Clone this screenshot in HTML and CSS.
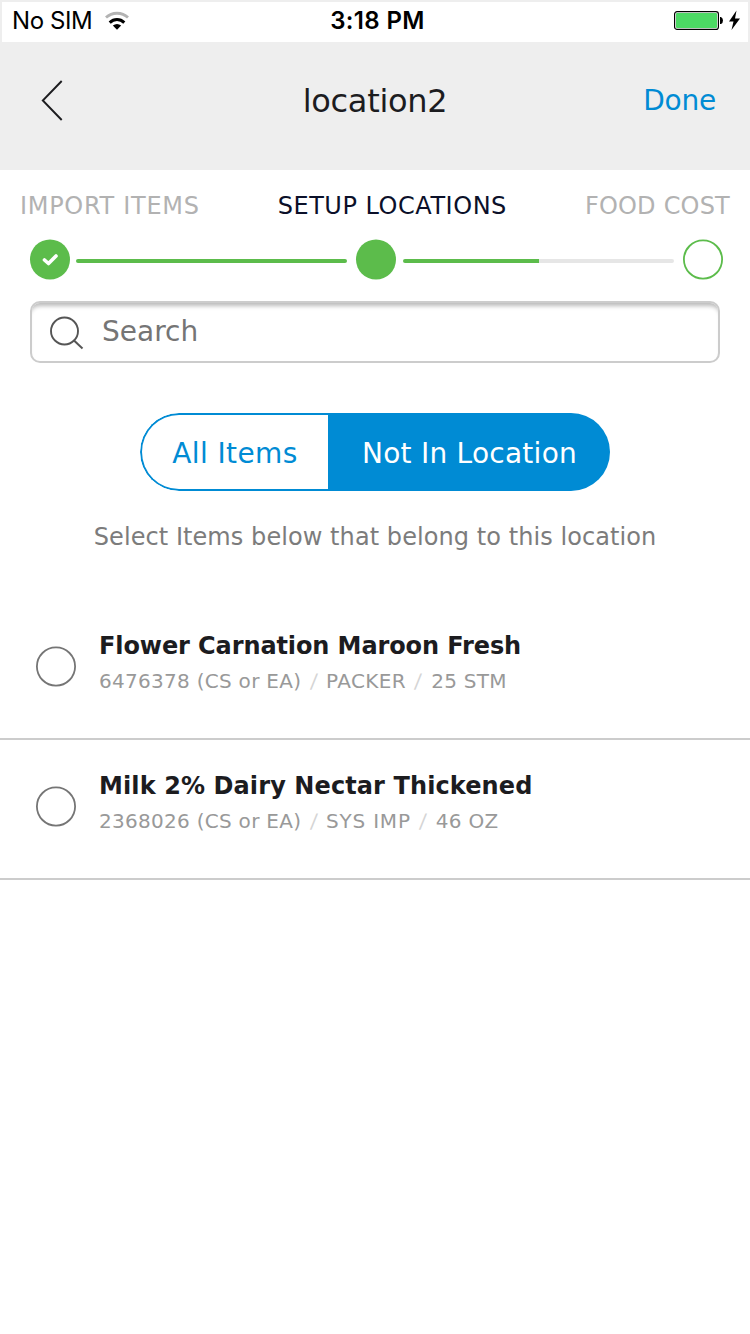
FILE: index.html
```html
<!DOCTYPE html>
<html lang="en">
<head>
<meta charset="utf-8">
<title>location2</title>
<link rel="stylesheet" href="styles.css">
</head>
<body>
<div class="status">
  <div class="carrier"><span class="sim">No SIM</span>
    <svg width="24" height="18" viewBox="0 0 24 18"><path d="M1 5.600C7-.2 17-.2 23 5.600" fill="none" stroke="#b3b3b3" stroke-width="2.800"/><path d="M4.700 10.600C9 6.500 15 6.500 19.300 10.600" fill="none" stroke="#000" stroke-width="3"/><path d="M7.800 13.600Q12 10.200 16.200 13.600L12 17.700Z"/></svg>
  </div>
  <span class="time">3:18 PM</span>
  <div class="power">
    <svg width="66" height="20" viewBox="0 0 66 20"><rect x=".6" y=".6" width="43.800" height="17.800" rx="2.500" fill="#fff" stroke="#000" stroke-width="1.200"/><rect x="2" y="2" width="41" height="15" rx="1" fill="#4cd964"/><path d="M46 6h1q2 1 2 3.500t-2 3.500h-1z"/><path d="M62.500 -.5L55 10.500h4.500L57.500 19L66 7.500h-5z"/></svg>
  </div>
</div>
<header class="nav">
  <svg class="back" width="22" height="42" viewBox="0 0 22 42"><path d="M19.700 1L.8 20.500L19.700 40" fill="none" stroke="#1c1c1f" stroke-width="1.900"/></svg>
  <h1 class="title">location2</h1>
  <a class="done">Done</a>
</header>
<nav class="tabs"><span class="import">IMPORT ITEMS</span><span class="active">SETUP LOCATIONS</span><span class="cost">FOOD COST</span></nav>
<div class="steps">
  <svg class="dot" width="40" height="40" viewBox="0 0 40 40"><circle cx="20" cy="20.500" r="20" fill="#5cbc4b"/><path d="M14.500 21L18.500 24.500L26 17" fill="none" stroke="#fff" stroke-width="3.600" stroke-linecap="round" stroke-linejoin="round"/></svg>
  <i class="bar"></i>
  <svg class="dot" width="40" height="40" viewBox="0 0 40 40"><circle cx="20" cy="20.500" r="20" fill="#5cbc4b"/></svg>
  <i class="bar half"></i>
  <svg class="dot" width="40" height="40" viewBox="0 0 40 40"><circle cx="20" cy="20.500" r="19.100" fill="none" stroke="#5cbc4b" stroke-width="1.800"/></svg>
</div>
<div class="search">
  <svg width="34" height="34" viewBox="0 0 34 34"><circle cx="14.500" cy="15" r="13.500" fill="none" stroke="#555" stroke-width="1.900"/><path d="M23.500 24L32.500 32.500" stroke="#555" stroke-width="2"/></svg>
  <span class="placeholder">Search</span>
</div>
<div class="segment"><span class="seg all">All Items</span><span class="seg on">Not In Location</span></div>
<p class="hint">Select Items below that belong to this location</p>
<main class="list">
  <div class="row"><svg class="radio" width="40" height="40" viewBox="0 0 40 40"><circle cx="20" cy="20.500" r="19.100" fill="none" stroke="#757575" stroke-width="1.800"/></svg><div class="text"><b class="name flower">Flower Carnation Maroon Fresh</b><span class="meta"><span class="code">6476378 (CS or EA)</span><em>/</em><span class="brand">PACKER</span><em>/</em><span class="size">25 STM</span></span></div></div>
  <div class="row"><svg class="radio" width="40" height="40" viewBox="0 0 40 40"><circle cx="20" cy="20.500" r="19.100" fill="none" stroke="#757575" stroke-width="1.800"/></svg><div class="text"><b class="name milk">Milk 2% Dairy Nectar Thickened</b><span class="meta"><span class="code">2368026 (CS or EA)</span><em>/</em><span class="brand wide">SYS IMP</span><em>/</em><span class="size">46 OZ</span></span></div></div>
</main>
</body>
</html>
```
FILE: styles.css
```css
* { box-sizing: border-box; }
body { margin: 0; width: 750px; height: 1334px; background: #fff; font-family: Verdana, "DejaVu Sans", sans-serif; white-space: nowrap; overflow: hidden; }
svg { display: block; flex: none; overflow: visible; }
.status { height: 42px; border: 2px solid #eee; border-bottom: 0; padding: 0 8px 2px 10px; display: grid; grid-template-columns: 1fr auto 1fr; align-items: center; font: 24px/38px Inter, sans-serif; color: #000; }
.carrier { display: flex; align-items: center; gap: 13px; }
.sim { letter-spacing: -.4px; }
.time { font-weight: 600; letter-spacing: .35px; padding-left: 3px; }
.power { display: flex; justify-content: flex-end; }
.nav { height: 128px; background: #eee; padding: 0 34px 10px 42px; display: grid; grid-template-columns: 1fr auto 1fr; align-items: center; }
.title { margin: 0 8px 0 0; font-size: 32px; font-weight: 400; letter-spacing: -.3px; color: #1c1c1f; }
.done { padding-bottom: 2px; font-size: 28px; letter-spacing: -.2px; color: #008bd4; justify-self: end; }
.tabs { height: 69px; padding: 21px 20px 0; display: flex; justify-content: space-between; font-size: 24px; line-height: 30px; color: #b2b2b2; }
.import { letter-spacing: .7px; }
.active { letter-spacing: .53px; color: #0b1029; }
.cost { letter-spacing: .2px; }
.steps { height: 41px; padding: 0 27px 1px 30px; display: flex; align-items: center; }
.bar { width: 271px; height: 4px; margin: 3px 9px 0 6px; border-radius: 2px; background: #5cbc4b; }
.half { margin-left: 7px; background: linear-gradient(90deg, #5cbc4b 136px, #e6e6e6 136px); }
.search { height: 62px; margin: 21px 30px 0; padding: 0 18px; display: flex; align-items: center; gap: 18px; border: 2px solid #ccc; border-radius: 10px; box-shadow: inset 0 6px 4px -3px #bbb; }
.search svg { margin-top: 2px; }
.placeholder { font-size: 28px; color: #757575; line-height: 34px; }
.segment { width: 470px; height: 78px; margin: 50px auto 0; display: flex; border-radius: 39px; overflow: hidden; font-size: 28px; color: #008bd4; }
.seg { text-align: center; line-height: 81px; }
.all { width: 188px; border: 2px solid #008bd4; border-right: 0; border-radius: 39px 0 0 39px; line-height: 77px; letter-spacing: .4px; }
.on { flex: 1; padding-left: 1px; color: #fff; background: #008bd4; letter-spacing: .25px; }
.hint { margin: 31px 0 0; height: 78px; font-size: 24px; line-height: 30px; letter-spacing: .07px; text-align: center; color: #7c7c7c; }
.row { height: 140px; padding: 30px 36px 0; border-bottom: 2px solid #ccc; display: flex; gap: 23px; }
.radio { margin-top: 16px; }
.name { display: block; font-size: 24px; line-height: 32px; color: #1c1c1f; }
.flower { letter-spacing: -.1px; }
.milk { letter-spacing: .1px; }
.meta { display: flex; margin-top: 5px; font-size: 20px; line-height: 28px; color: #999; }
.code { width: 203px; letter-spacing: .28px; }
.meta em { width: 24px; font-style: normal; text-align: center; color: #d5d5d5; transform: skewX(-5deg); }
.brand { letter-spacing: .4px; }
.wide { letter-spacing: .8px; }
.size { letter-spacing: .3px; padding-left: 1px; }
```
